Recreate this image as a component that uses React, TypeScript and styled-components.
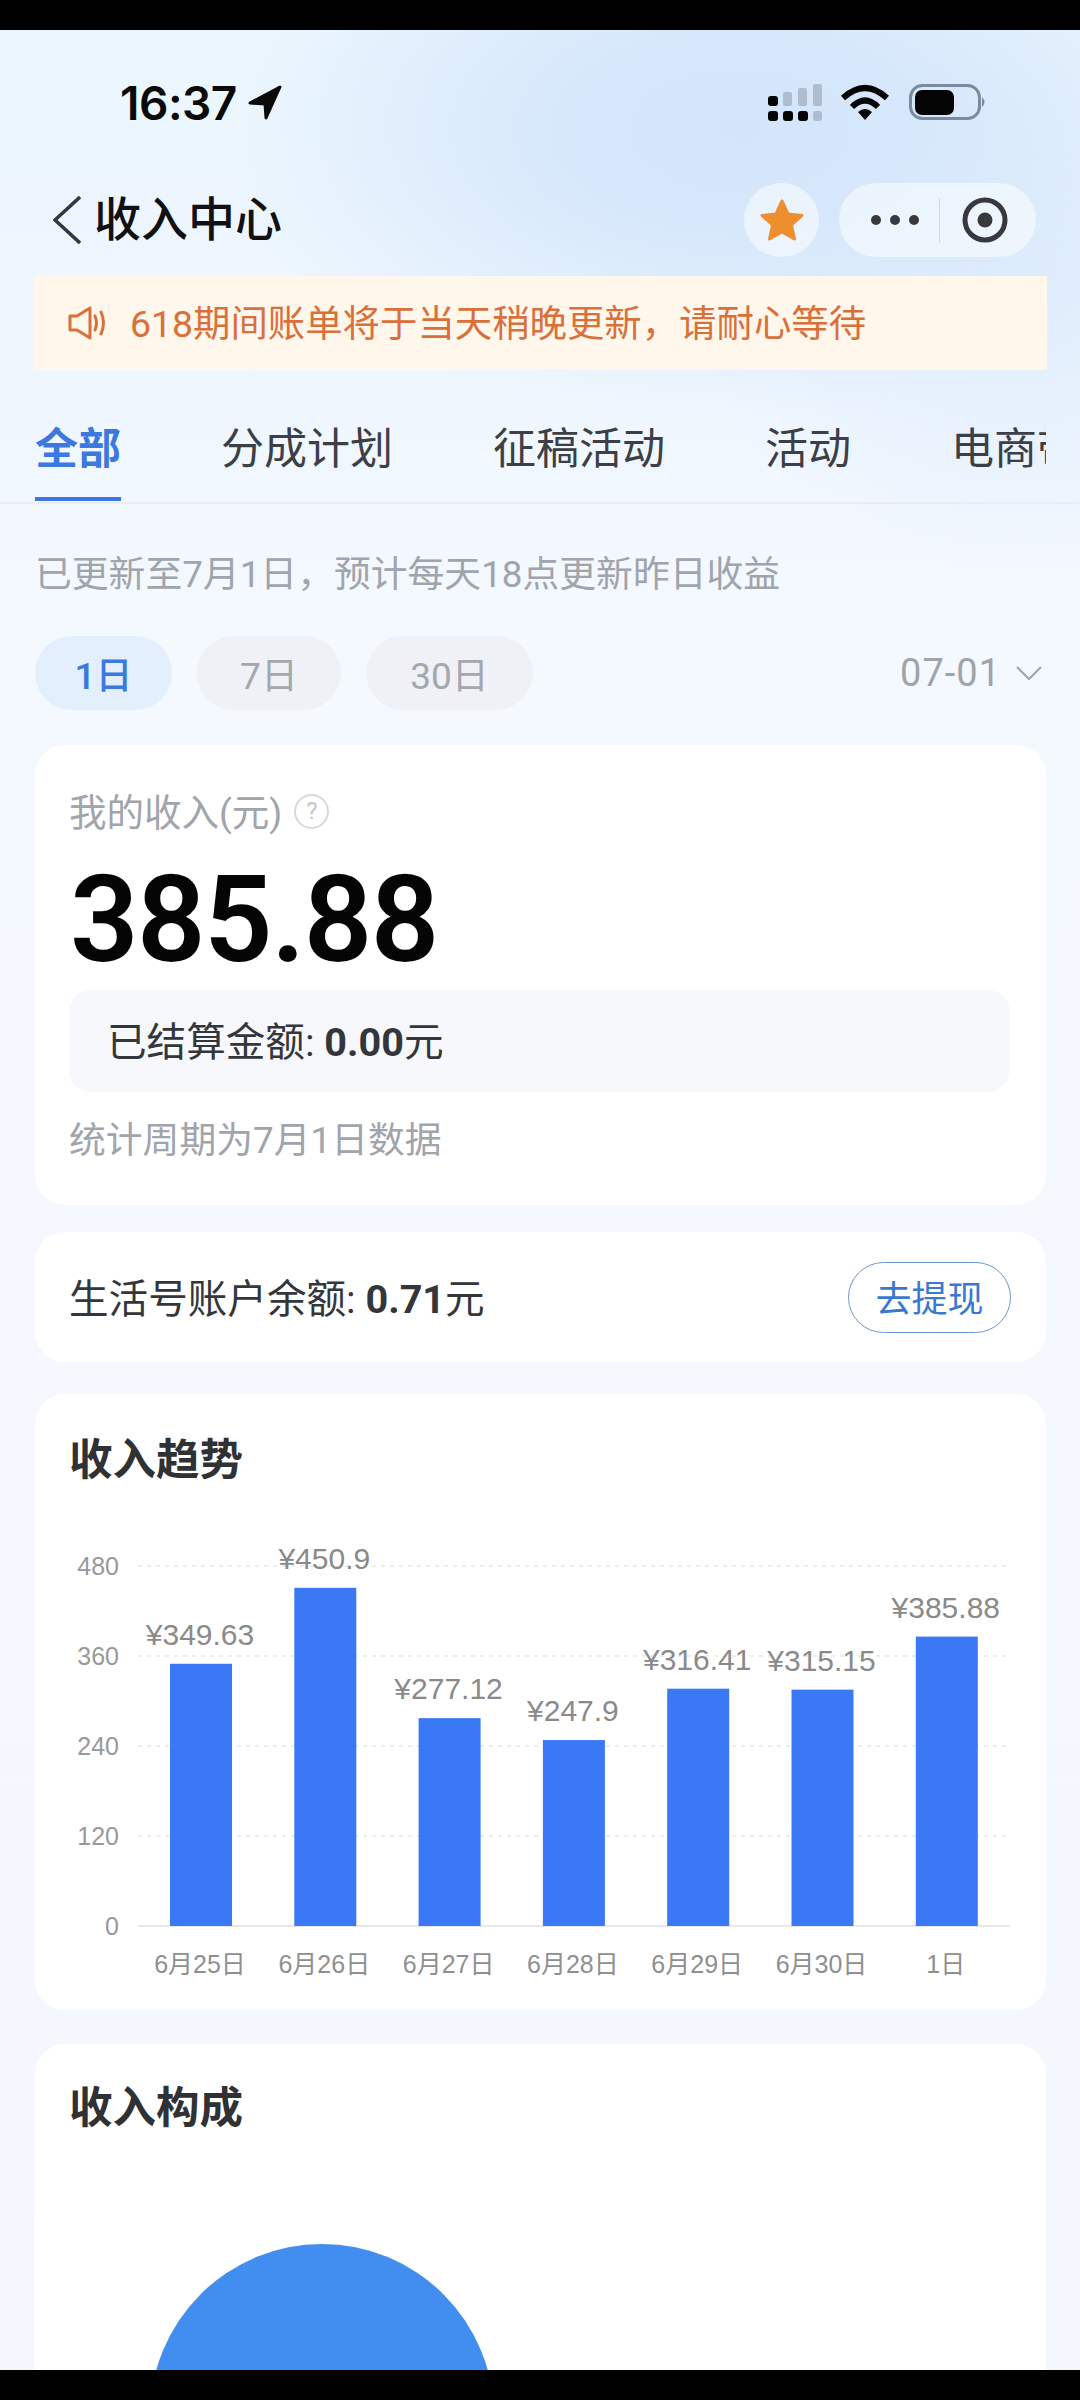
import styled, { createGlobalStyle } from 'styled-components';

const GlobalStyle = createGlobalStyle`
  html, body { margin: 0; padding: 0; background: #000; }
  * { box-sizing: border-box; }
`;

const sans = `Roboto, "Noto Sans CJK SC", sans-serif`;

const Frame = styled.div`
  width: 1080px;
  height: 2400px;
  display: flex;
  flex-direction: column;
  background: #000;
  font-family: ${sans};
  overflow: hidden;
`;

const BlackBar = styled.div`
  height: 30px;
  flex: none;
  background: #000;
`;

const Screen = styled.div`
  flex: 1;
  min-height: 0;
  overflow: hidden;
  background:
    radial-gradient(ellipse 520px 290px at 740px 100px, #d3e5fb 0%, #d7e8fb 35%, rgba(215, 232, 251, 0) 100%),
    radial-gradient(ellipse 320px 280px at 1020px 260px, #e0edfc 0%, rgba(224, 237, 252, 0) 100%),
    linear-gradient(180deg, #ecf6fe 0, #eef6fe 300px, #f4f8ff 560px, #f5f7fe 100%);
`;

const StatusBar = styled.div`
  height: 146px;
  display: flex;
  align-items: center;
  padding: 0 92px 0 120px;
`;

const Clock = styled.span`
  font-family: Inter, sans-serif;
  font-size: 46px;
  font-weight: 600;
  letter-spacing: -0.5px;
  color: #0a0a0a;
  margin-right: 10px;
`;

const StatusIcons = styled.div`
  margin-left: auto;
  display: flex;
  align-items: center;
  padding-top: 2px;
`;

const NavBar = styled.div`
  height: 88px;
  display: flex;
  align-items: center;
  padding: 0 44px 0 53px;
`;

const Title = styled.h1`
  margin: 0 0 0 13px;
  font-size: 47px;
  font-weight: 500;
  color: #111;
  line-height: 60px;
`;

const StarButton = styled.div`
  margin-left: auto;
  width: 75px;
  height: 74px;
  border-radius: 50%;
  background: rgba(255, 255, 255, 0.5);
  display: flex;
  align-items: center;
  justify-content: center;
`;

const Capsule = styled.div`
  margin-left: 20px;
  width: 197px;
  height: 74px;
  border-radius: 37px;
  background: rgba(255, 255, 255, 0.5);
  display: flex;
  align-items: center;
  padding-left: 32px;
`;

const CapsuleDivider = styled.div`
  width: 1px;
  height: 45px;
  margin: 0 22px 0 20px;
  background: #d3d8de;
`;

const Banner = styled.div`
  margin: 12px 33px 0 34px;
  height: 94px;
  display: flex;
  align-items: center;
  gap: 24px;
  padding-left: 34px;
  background: #fff6ec;
  color: #d9703a;
  font-size: 37.4px;
`;

const BannerText = styled.span`
  margin-bottom: 5px;
`;

const TabRow = styled.div`
  height: 134px;
  padding-left: 35px;
  border-bottom: 2px solid #e9edf3;
`;

const TabStrip = styled.div`
  width: 1011px;
  display: flex;
  gap: 100px;
  overflow: hidden;
`;

const Tab = styled.div<{ $active?: boolean }>`
  flex: none;
  height: 131px;
  padding-top: 49px;
  line-height: 60px;
  font-size: 43px;
  font-weight: ${(p) => (p.$active ? 600 : 400)};
  color: ${(p) => (p.$active ? '#3b78e0' : '#3c3f45')};
  border-bottom: 4px solid ${(p) => (p.$active ? '#3b78e0' : 'transparent')};
`;

const Content = styled.div`
  padding: 0 34px 0 35px;
`;

const Note = styled.p`
  margin: 41px 0 0;
  line-height: 60px;
  font-size: 36.8px;
  color: #a0a4ab;
`;

const FilterRow = styled.div`
  margin-top: 31px;
  display: flex;
  align-items: center;
  gap: 25px;
`;

const Pill = styled.div<{ $active?: boolean; $width: number }>`
  width: ${(p) => p.$width}px;
  height: 74px;
  border-radius: 37px;
  display: flex;
  align-items: center;
  justify-content: center;
  font-size: 37px;
  font-weight: ${(p) => (p.$active ? 500 : 400)};
  color: ${(p) => (p.$active ? '#3b78e0' : '#a3a7ae')};
  background: ${(p) => (p.$active ? '#e3effc' : '#eff1f6')};
`;

const DatePick = styled.div`
  margin-left: auto;
  margin-right: 4px;
  display: flex;
  align-items: center;
  gap: 15px;
  font-size: 38px;
  letter-spacing: 1px;
  color: #9fa3aa;
`;

const Card = styled.section<{ $gap: number; $height: number }>`
  margin-top: ${(p) => p.$gap}px;
  min-height: ${(p) => p.$height}px;
  background: #fff;
  border-radius: 30px;
`;

const IncomeCard = styled(Card)`
  padding: 36px 36px 0 34px;
`;

const LabelRow = styled.div`
  height: 60px;
  padding-bottom: 4px;
  display: flex;
  align-items: center;
  gap: 12px;
  font-size: 37.5px;
  color: #a0a4ab;
`;

const HelpMark = styled.span`
  width: 35px;
  height: 35px;
  margin-top: 4px;
  border-radius: 50%;
  border: 2px solid #d6d8db;
  color: #c4c6ca;
  font-size: 24px;
  line-height: 31px;
  text-align: center;
`;

const Amount = styled.div`
  margin-top: 19px;
  padding-left: 1px;
  font-family: Roboto, sans-serif;
  font-size: 120px;
  font-weight: 600;
  letter-spacing: -1.5px;
  line-height: 120px;
  color: #050505;
`;

const SettledBox = styled.div`
  margin-top: 10px;
  height: 102px;
  padding: 0 0 5px 38px;
  border-radius: 22px;
  background: #f6f8fc;
  display: flex;
  align-items: center;
  font-size: 39.6px;
  color: #33363b;
`;

const Strong = styled.b`
  font-weight: 700;
`;

const StatLine = styled.div`
  margin-top: 19px;
  line-height: 60px;
  font-size: 36.8px;
  color: #a0a4ab;
`;

const BalanceCard = styled(Card)`
  display: flex;
  align-items: center;
  justify-content: space-between;
  padding: 0 35px 0 34px;
  font-size: 39.6px;
  color: #33363b;
`;

const BalanceText = styled.span`
  margin-bottom: 4px;
`;

const WithdrawButton = styled.div`
  width: 163px;
  height: 71px;
  padding-bottom: 2px;
  border-radius: 36px;
  border: 1.5px solid #6b97cf;
  display: flex;
  align-items: center;
  justify-content: center;
  font-size: 36px;
  color: #3b78d0;
`;

const ChartCard = styled(Card)`
  padding-top: 37px;
`;

const PieCard = styled(Card)`
  padding-top: 35px;
`;

const CardTitle = styled.h2`
  margin: 0;
  padding-left: 34px;
  line-height: 60px;
  font-size: 43.5px;
  font-weight: 700;
  color: #2f3135;
`;

const ChartSvg = styled.svg`
  display: block;
  width: 1011px;
  height: 519px;
  font-family: "Liberation Sans", "Noto Sans CJK SC", sans-serif;
`;

const PieSvg = styled.svg`
  display: block;
  margin: 105px 0 0 115px;
`;

// page y minus the top of the svg
const Y0 = 1926 - 1491;
const PX_PER_UNIT = 0.75;

const bars = [
  { day: '6月25日', value: 349.63, label: '¥349.63' },
  { day: '6月26日', value: 450.9, label: '¥450.9' },
  { day: '6月27日', value: 277.12, label: '¥277.12' },
  { day: '6月28日', value: 247.9, label: '¥247.9' },
  { day: '6月29日', value: 316.41, label: '¥316.41' },
  { day: '6月30日', value: 315.15, label: '¥315.15' },
  { day: '1日', value: 385.88, label: '¥385.88' },
];

function IncomeChart() {
  return (
    <ChartSvg viewBox="0 0 1011 519">
      {[480, 360, 240, 120, 0].map((tick) => {
        const y = Y0 - tick * PX_PER_UNIT;
        return (
          <g key={tick}>
            <text x="84" y={y + 9} textAnchor="end" fontSize="25" fill="#999">
              {tick}
            </text>
            <line
              x1="103"
              x2="975"
              y1={y}
              y2={y}
              stroke={tick === 0 ? '#e6e8ea' : '#ebedef'}
              strokeWidth="2"
              strokeDasharray={tick === 0 ? undefined : '4 5'}
            />
          </g>
        );
      })}
      {bars.map((b, i) => {
        const x = 135 + i * 124.3;
        const h = b.value * PX_PER_UNIT;
        return (
          <g key={b.day}>
            <rect x={x} y={Y0 - h} width="62" height={h} fill="#3a78f5" />
            <text x={x + 30} y={Y0 - h - 19} textAnchor="middle" fontSize="30" fill="#8a8a8a">
              {b.label}
            </text>
            <text x={x + 30} y={Y0 + 47} textAnchor="middle" fontSize="25" fill="#8f8f8f">
              {b.day}
            </text>
          </g>
        );
      })}
    </ChartSvg>
  );
}

export default function App() {
  return (
    <>
      <GlobalStyle />
      <Frame>
        <BlackBar />
        <Screen>
          <StatusBar>
            <Clock>16:37</Clock>
            <svg width="36" height="36" viewBox="0 0 36 36">
              <path d="M33 2 L3 18 L18 19 L19 33 Z" fill="#0a0a0a" stroke="#0a0a0a" strokeWidth="3" strokeLinejoin="round" />
            </svg>
            <StatusIcons>
              <svg width="220" height="40" viewBox="0 0 220 40">
                <rect x="0" y="12" width="10" height="10" rx="3" fill="#050505" />
                <rect x="15" y="8" width="9" height="14" rx="2" fill="#aebccd" />
                <rect x="30" y="4" width="9" height="18" rx="2" fill="#aebccd" />
                <rect x="45" y="0" width="9" height="22" rx="2" fill="#aebccd" />
                <rect x="0" y="27" width="10" height="10" rx="3" fill="#050505" />
                <rect x="15" y="27" width="10" height="10" rx="3" fill="#050505" />
                <rect x="30" y="27" width="10" height="10" rx="3" fill="#050505" />
                <rect x="45" y="27" width="9" height="10" rx="3" fill="#aebccd" />
                <path d="M75 14 Q97 -6 119 14" fill="none" stroke="#050505" strokeWidth="6" />
                <path d="M84 23 Q97 10 110 23" fill="none" stroke="#050505" strokeWidth="6" />
                <path d="M90 28 Q97 22 104 28 L97 36 Z" fill="#050505" />
                <rect x="142.5" y="1.5" width="69" height="33" rx="12" fill="none" stroke="#7b8aa0" strokeWidth="3" />
                <rect x="147" y="6" width="39" height="25" rx="7" fill="#050505" />
                <path d="M214 13 Q219 18 214 23 Z" fill="#7b8aa0" />
              </svg>
            </StatusIcons>
          </StatusBar>

          <NavBar>
            <svg width="28" height="48" viewBox="0 0 28 48">
              <path d="M27 1 L2 24 L27 47" fill="none" stroke="#33363b" strokeWidth="3.5" />
            </svg>
            <Title>收入中心</Title>
            <StarButton>
              <svg width="46" height="44" viewBox="0 0 46 44">
                <path
                  d="M23 3 L29 16 L43 17.5 L32.5 27 L35.5 41 L23 34 L10.5 41 L13.5 27 L3 17.5 L17 16 Z"
                  fill="#ef8e2e"
                  stroke="#ef8e2e"
                  strokeWidth="3"
                  strokeLinejoin="round"
                />
              </svg>
            </StarButton>
            <Capsule>
              <svg width="48" height="12" viewBox="0 0 48 12">
                <circle cx="5" cy="6" r="5" fill="#37393d" />
                <circle cx="24" cy="6" r="5" fill="#37393d" />
                <circle cx="43" cy="6" r="5" fill="#37393d" />
              </svg>
              <CapsuleDivider />
              <svg width="46" height="46" viewBox="0 0 46 46">
                <circle cx="23" cy="23" r="20" fill="none" stroke="#37393d" strokeWidth="5" />
                <circle cx="23" cy="23" r="7.5" fill="#37393d" />
              </svg>
            </Capsule>
          </NavBar>

          <Banner>
            <svg width="38" height="34" viewBox="0 0 38 34" fill="none" stroke="#d9703a" strokeWidth="3">
              <path d="M2 10 H9 L22 2 V32 L9 24 H2 Z" strokeLinejoin="round" />
              <path d="M27 10 Q30 17 27 24" strokeLinecap="round" />
              <path d="M33 6 Q38 17 33 28" strokeLinecap="round" />
            </svg>
            <BannerText>618期间账单将于当天稍晚更新，请耐心等待</BannerText>
          </Banner>

          <TabRow>
            <TabStrip>
              <Tab $active>全部</Tab>
              <Tab>分成计划</Tab>
              <Tab>征稿活动</Tab>
              <Tab>活动</Tab>
              <Tab>电商带货</Tab>
            </TabStrip>
          </TabRow>

          <Content>
            <Note>已更新至7月1日，预计每天18点更新昨日收益</Note>

            <FilterRow>
              <Pill $active $width={137}>1日</Pill>
              <Pill $width={144}>7日</Pill>
              <Pill $width={167}>30日</Pill>
              <DatePick>
                <span>07-01</span>
                <svg width="26" height="16" viewBox="0 0 26 16">
                  <path d="M1 2 L13 14 L25 2" fill="none" stroke="#9fa3aa" strokeWidth="2" />
                </svg>
              </DatePick>
            </FilterRow>

            <IncomeCard $gap={35} $height={460}>
              <LabelRow>
                <span>我的收入(元)</span>
                <HelpMark>?</HelpMark>
              </LabelRow>
              <Amount>385.88</Amount>
              <SettledBox>
                <span>
                  已结算金额: <Strong>0.00</Strong>元
                </span>
              </SettledBox>
              <StatLine>统计周期为7月1日数据</StatLine>
            </IncomeCard>

            <BalanceCard $gap={27} $height={130}>
              <BalanceText>
                生活号账户余额: <Strong>0.71</Strong>元
              </BalanceText>
              <WithdrawButton>去提现</WithdrawButton>
            </BalanceCard>

            <ChartCard $gap={32} $height={616}>
              <CardTitle>收入趋势</CardTitle>
              <IncomeChart />
            </ChartCard>

            <PieCard $gap={34} $height={600}>
              <CardTitle>收入构成</CardTitle>
              <PieSvg width="344" height="344" viewBox="0 0 344 344">
                <circle cx="172" cy="172" r="172" fill="#418ef0" />
              </PieSvg>
            </PieCard>
          </Content>
        </Screen>
        <BlackBar />
      </Frame>
    </>
  );
}
